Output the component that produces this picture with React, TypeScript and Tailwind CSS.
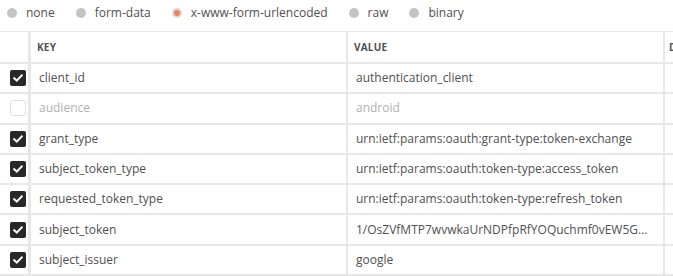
import React from "react";

const rows: { key: string; value: string; on: boolean }[] = [
  { key: "client_id", value: "authentication_client", on: true },
  { key: "audience", value: "android", on: false },
  { key: "grant_type", value: "urn:ietf:params:oauth:grant-type:token-exchange", on: true },
  { key: "subject_token_type", value: "urn:ietf:params:oauth:token-type:access_token", on: true },
  { key: "requested_token_type", value: "urn:ietf:params:oauth:token-type:refresh_token", on: true },
  { key: "subject_token", value: "1/OsZVfMTP7wvwkaUrNDPfpRfYOQuchmf0vEW5G...", on: true },
  { key: "subject_issuer", value: "google", on: true },
  { key: "", value: "", on: false },
];

const radios = ["none", "form-data", "x-www-form-urlencoded", "raw", "binary"];

function Check({ on, hidden }: { on: boolean; hidden?: boolean }) {
  if (hidden) return null;
  if (!on)
    return <div className="w-4 h-4 rounded-[3px] border border-[#e0e0e0] bg-white" />;
  return (
    <div className="w-4 h-4 rounded-[2px] bg-[#282828] flex items-center justify-center">
      <svg width="10" height="8" viewBox="0 0 10 8">
        <path d="M1.2 4.2 L3.8 6.6 L8.8 1.4" stroke="white" strokeWidth="2" fill="none" strokeLinecap="square" />
      </svg>
    </div>
  );
}

export default function App() {
  return (
    <div
      className="w-[673px] h-[276px] overflow-hidden bg-white text-[#505050]"
      style={{ fontFamily: '"Open Sans", sans-serif' }}
    >
      <div className="h-[31px] flex items-center pb-[6px] pl-[7px] text-[12px]">
        {radios.map((r) => (
          <div key={r} className="flex items-center mr-[21px]">
            {r === "x-www-form-urlencoded" ? (
              <div className="w-[10px] h-[10px] rounded-full bg-[#f0825a] border-2 border-[#e2d6d0]" />
            ) : (
              <div className="w-[10px] h-[10px] rounded-full bg-[#c4c4c4]" />
            )}
            <span className="ml-[9px]">{r}</span>
          </div>
        ))}
      </div>
      <div className="border-t border-[#e8e8e8]">
        <div className="flex h-[32px] border-b-2 border-[#e8e8e8]">
          <div className="w-[28px] shrink-0" />
          <div className="w-[3px] bg-[#e8e8e8] shrink-0" />
          <div className="w-[315px] shrink-0 flex items-center pl-[6px] text-[10px] font-bold tracking-[0.2px]">KEY</div>
          <div className="w-[2px] bg-[#e8e8e8] shrink-0" />
          <div className="w-[315px] shrink-0 flex items-center pl-[6px] text-[10px] font-bold tracking-[0.2px]">VALUE</div>
          <div className="w-[2px] bg-[#e8e8e8] shrink-0" />
          <div className="flex-1 flex items-center pl-[4px] text-[10px] font-bold whitespace-nowrap overflow-hidden">DESCRIPTION</div>
        </div>
        {rows.map((r, i) => (
          <div key={i} className="flex h-[30.3px] border-b-2 border-[#e8e8e8] text-[12px]">
            <div className="w-[28px] shrink-0 flex items-center pl-[10px]">
              <Check on={r.on} hidden={r.key === ""} />
            </div>
            <div className="w-[3px] bg-[#e8e8e8] shrink-0" />
            <div className={`w-[315px] shrink-0 flex items-center pl-[8px] ${r.on ? "" : "text-[#b0b0b0]"}`}>{r.key}</div>
            <div className="w-[2px] bg-[#e8e8e8] shrink-0" />
            <div className={`w-[315px] shrink-0 flex items-center pl-[8px] whitespace-nowrap overflow-hidden ${r.on ? "" : "text-[#b0b0b0]"}`}>{r.value}</div>
            <div className="w-[2px] bg-[#e8e8e8] shrink-0" />
            <div className="flex-1" />
          </div>
        ))}
      </div>
    </div>
  );
}
